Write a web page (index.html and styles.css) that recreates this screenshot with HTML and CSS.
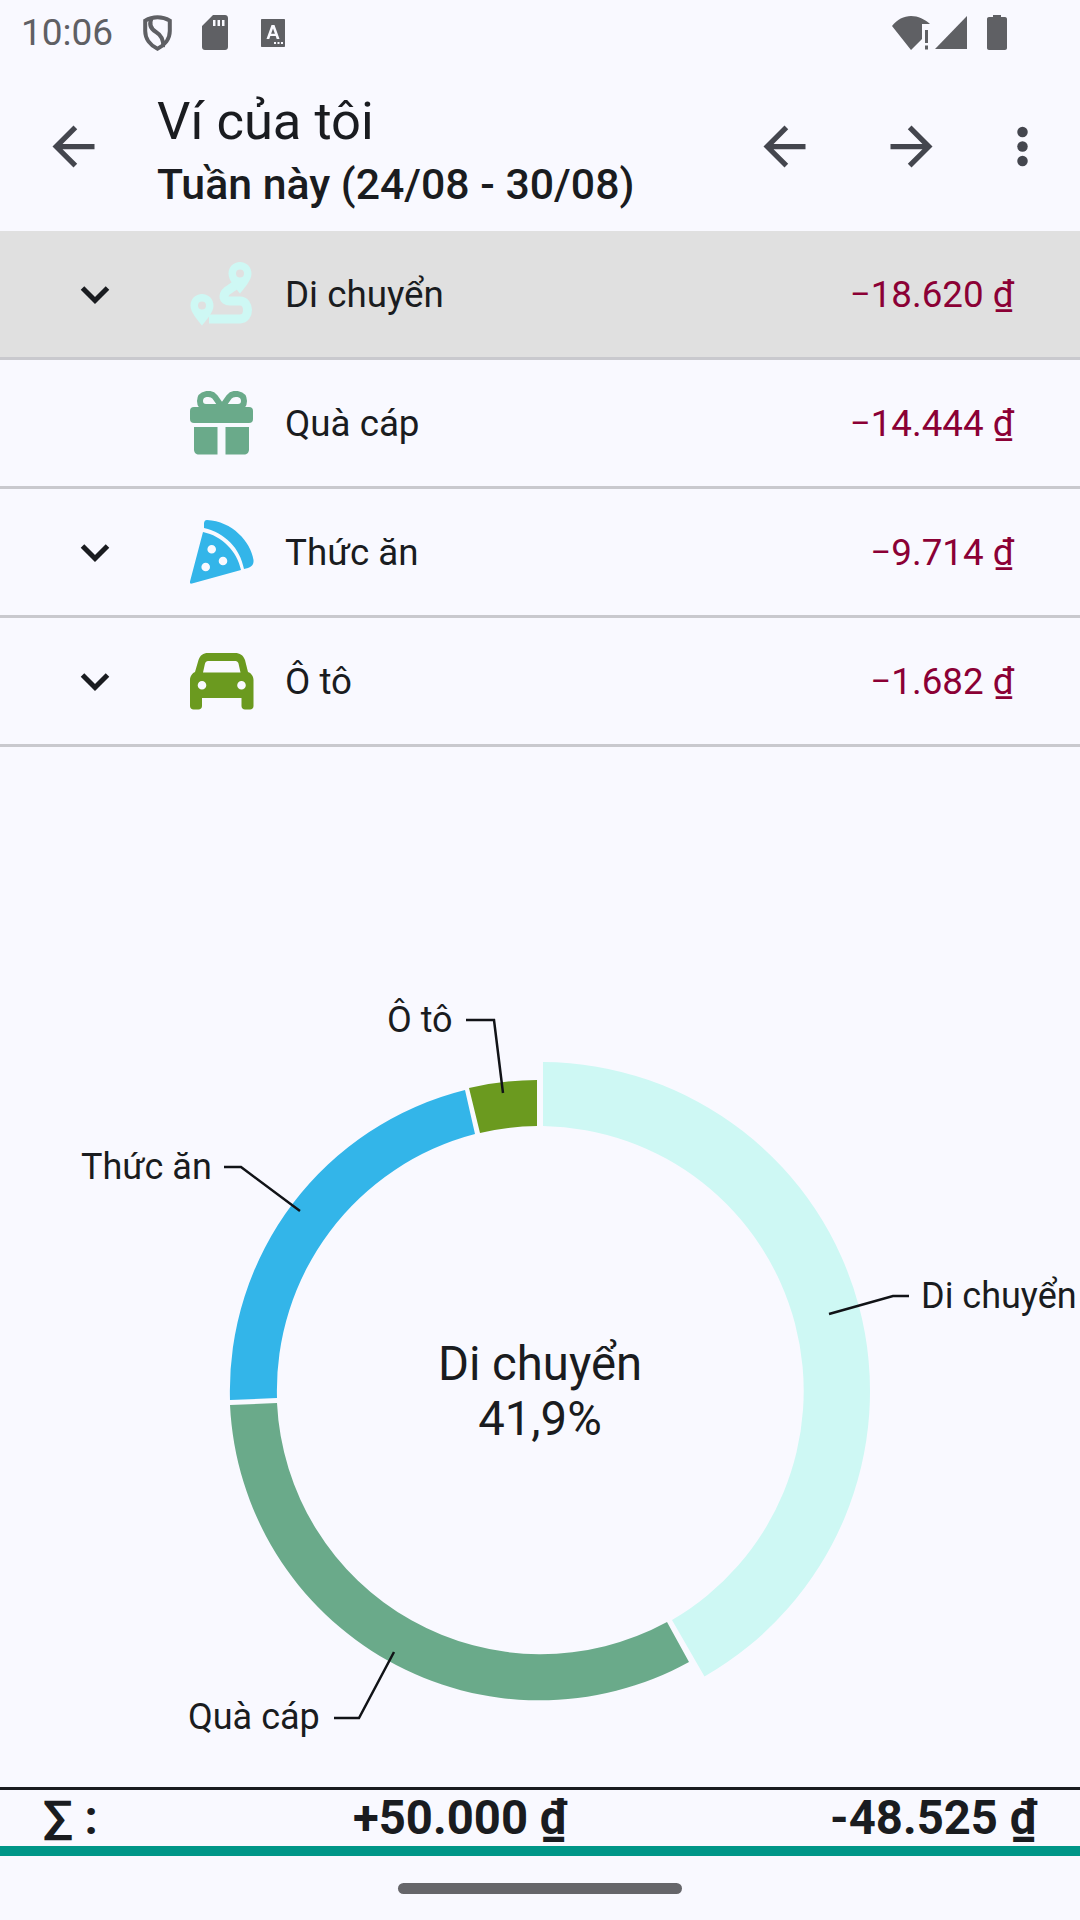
FILE: index.html
```html
<!DOCTYPE html>
<html lang="vi">
<head>
    <meta charset="UTF-8">
    <meta name="viewport" content="width=device-width, initial-scale=1.0">
    <title>Ví của tôi</title>
    <link rel="stylesheet" href="styles.css">
</head>
<body>
    <div class="app">
        <div class="status-bar">
            <div class="status-left">
                <span class="status-time">10:06</span>
                <svg class="icon-shield" viewBox="0 0 29 36"><path d="M14.500 2.200C19 2.200 23.500 3.600 26.800 5.600V16C26.800 24 21.500 30.500 14.500 33.700C7.500 30.500 2.200 24 2.200 16V5.600C5.500 3.600 10 2.200 14.500 2.200Z"/><path d="M8.500 3.500C5.500 10 8 14 13 17C18 20 21 24 20 32"/></svg>
                <svg class="icon-sd" viewBox="0 0 26 35"><path fill-rule="evenodd" d="M11 0H23C24.700 0 26 1.300 26 3V32C26 33.700 24.700 35 23 35H3C1.300 35 0 33.700 0 32V11ZM11 5V11H13.500V5ZM15.500 5V11H18V5ZM20 5V11H22.500V5Z"/></svg>
                <svg class="icon-keyboard" viewBox="0 0 24 28"><path fill-rule="evenodd" d="M1 0H23C23.600 0 24 .4 24 1V27C24 27.600 23.600 28 23 28H1C.4 28 0 27.600 0 27V1C0 .4 .4 0 1 0ZM10.500 6L5.500 20H8.300L9.300 17H14.700L15.700 20H18.500L13.500 6ZM12 9.500L13.900 14.700H10.100ZM13 23V25H15V23ZM16.500 23V25H18.500V23ZM20 23V25H22V23Z"/></svg>
            </div>
            <div class="status-right">
                <svg class="icon-wifi" viewBox="0 0 38 34"><path d="M0 10C5 3.500 12 0 19 0C26 0 33 3.500 38 8H30V23L19 34Z"/><path d="M33 14H36V27H33ZM33 29.500H36V33.500H33Z"/></svg>
                <svg class="icon-signal" viewBox="0 0 32 33"><path d="M32 0V33H0Z"/></svg>
                <svg class="icon-battery" viewBox="0 0 20 35"><path d="M6 0H14V2H18C19.100 2 20 2.900 20 4V33C20 34.100 19.100 35 18 35H2C.9 35 0 34.100 0 33V4C0 2.900 .9 2 2 2H6Z"/></svg>
            </div>
        </div>

        <div class="toolbar">
            <svg class="tool-icon" viewBox="0 0 24 24"><path d="M20 11H7.830l5.590-5.590L12 4l-8 8 8 8 1.410-1.410L7.830 13H20v-2z"/></svg>
            <div class="toolbar-title">
                <div class="title">Ví của tôi</div>
                <div class="subtitle">Tuần này (24/08 - 30/08)</div>
            </div>
            <svg class="tool-icon prev-icon" viewBox="0 0 24 24"><path d="M20 11H7.830l5.590-5.590L12 4l-8 8 8 8 1.410-1.410L7.830 13H20v-2z"/></svg>
            <svg class="tool-icon next-icon" viewBox="0 0 24 24"><path d="M12 4l-1.410 1.410L16.170 11H4v2h12.170l-5.580 5.590L12 20l8-8z"/></svg>
            <svg class="tool-icon more-icon" viewBox="0 0 24 24"><circle cx="12" cy="6.500" r="2"/><circle cx="12" cy="12" r="2"/><circle cx="12" cy="17.500" r="2"/></svg>
        </div>

        <div class="category-list">
            <div class="category-row selected">
                <svg class="chevron" viewBox="0 0 64 40"><path d="M19.500 14L32 26.500L44.500 14"/></svg>
                <svg class="category-icon" viewBox="0 0 64 64">
                    <path class="route-line" d="M47 22L40 27C32 31 32 39 40 39H50C60 39 60 57 50 57H19"/>
                    <path class="route-pin" fill-rule="evenodd" d="M12 32C18.400 32 23.500 37 23.500 43.500C23.500 50.500 16 58.500 12 63.500C8 58.500 .5 50.500 .5 43.500C.5 37 5.600 32 12 32ZM12 39.500A4 4 0 1 0 12 47.500A4 4 0 1 0 12 39.500Z"/>
                    <path class="route-pin" fill-rule="evenodd" d="M50 0C56.400 0 61.500 5 61.500 11.500C61.500 18.500 54 26.500 50 31.500C46 26.500 38.500 18.500 38.500 11.500C38.500 5 43.600 0 50 0ZM50 7.500A4 4 0 1 0 50 15.500A4 4 0 1 0 50 7.500Z"/>
                </svg>
                <span class="category-name">Di chuyển</span>
                <span class="category-amount">−18.620 ₫</span>
            </div>
            <div class="category-row">
                <span class="chevron"></span>
                <svg class="category-icon gift-icon" viewBox="0 0 64 64">
                    <path class="gift-bow" d="M32 16L25 6C21 1 10 2 10 10C10 14 12 16 16 16ZM32 16L39 6C43 1 54 2 54 10C54 14 52 16 48 16Z"/>
                    <rect x="0" y="16" width="63" height="16" rx="4"/>
                    <path d="M4 36H27.500V63.500H9C6 63.500 4 61.500 4 58.500ZM35.500 36H59V58.500C59 61.500 57 63.500 54 63.500H35.500Z"/>
                </svg>
                <span class="category-name">Quà cáp</span>
                <span class="category-amount">−14.444 ₫</span>
            </div>
            <div class="category-row">
                <svg class="chevron" viewBox="0 0 64 40"><path d="M19.500 14L32 26.500L44.500 14"/></svg>
                <svg class="category-icon pizza-icon" viewBox="0 0 64 64">
                    <path d="M17 0C42 1 61 22 63.500 40C64 45 61 47 58 48L54 49C50 28 35 13 14 8L14 3C14.500 1 15 0 17 0Z"/>
                    <path fill-rule="evenodd" d="M13 12C32 16 47 31 51 50L2 63.500C.5 64 -.5 63 0 61.500ZM21.700 25A4.300 4.300 0 1 0 21.700 33.600A4.300 4.300 0 1 0 21.700 25ZM33 36.700A4.300 4.300 0 1 0 33 45.300A4.300 4.300 0 1 0 33 36.700ZM15.700 42.700A4.300 4.300 0 1 0 15.700 51.300A4.300 4.300 0 1 0 15.700 42.700Z"/>
                </svg>
                <span class="category-name">Thức ăn</span>
                <span class="category-amount">−9.714 ₫</span>
            </div>
            <div class="category-row">
                <svg class="chevron" viewBox="0 0 64 40"><path d="M19.500 14L32 26.500L44.500 14"/></svg>
                <svg class="category-icon car-icon" viewBox="0 0 64 57">
                    <path fill-rule="evenodd" d="M18 0H45C50 0 53 2 55 7L58 19C61 20 63.500 23 63.500 27V53C63.500 55 62 56.500 60 56.500H55C53 56.500 51.500 55 51.500 53V45H12V53C12 55 10.500 56.500 8.500 56.500H3.500C1.500 56.500 0 55 0 53V27C0 23 2.500 20 5 19L8.500 7C10.500 2 13 0 18 0ZM18 8C16.500 8 15.500 9 15 10.500L13 19.500H50.500L48.500 10.500C48 9 47 8 45.500 8ZM12 28A4.300 4.300 0 1 0 12 36.600A4.300 4.300 0 1 0 12 28ZM51.500 28A4.300 4.300 0 1 0 51.500 36.600A4.300 4.300 0 1 0 51.500 28Z"/>
                </svg>
                <span class="category-name">Ô tô</span>
                <span class="category-amount">−1.682 ₫</span>
            </div>
        </div>

        <div class="chart-area">
            <svg class="donut" viewBox="0 746 1080 1041">
                <path class="slice-move" d="M543 1061A329 329 0 0 1 704.500 1675.500L672 1619A265 265 0 0 0 543 1125Z"/>
                <path class="slice-gift" d="M689 1661A310 310 0 0 1 230 1404L277 1402A264 264 0 0 0 667 1621Z"/>
                <path class="slice-food" d="M230 1399A310 310 0 0 1 465 1089L475 1133A265 265 0 0 0 277 1397Z"/>
                <path class="slice-car" d="M469 1087A311 311 0 0 1 537 1079V1125A265 265 0 0 0 480 1132Z"/>

                <polyline class="leader" points="829,1313 893,1295 909,1295"/>
                <polyline class="leader" points="394,1651 359,1717 334,1717"/>
                <polyline class="leader" points="300,1210 241,1166 224,1166"/>
                <polyline class="leader" points="503,1092 494,1019 466,1019"/>

                <text class="slice-label" x="921" y="1307">Di chuyển</text>
                <text class="slice-label" x="188" y="1728">Quà cáp</text>
                <text class="slice-label" x="81" y="1178">Thức ăn</text>
                <text class="slice-label" x="387" y="1031">Ô tô</text>

                <text class="center-label" x="540" y="1379">Di chuyển</text>
                <text class="center-label" x="540" y="1434">41,9%</text>
            </svg>
        </div>

        <div class="totals">
            <span class="total-sigma">∑ :</span>
            <span class="total-income">+50.000 ₫</span>
            <span class="total-expense">-48.525 ₫</span>
        </div>
        <div class="accent-bar"></div>
        <div class="nav-bar"><div class="nav-handle"></div></div>
    </div>
</body>
</html>
```

FILE: styles.css
```css
* {
    box-sizing: border-box;
}

body {
    margin: 0;
    background: #f9f9ff;
    color: #1a1c20;
    font-family: Roboto, "Noto Sans", sans-serif;
}

.app {
    width: 1080px;
    height: 1920px;
    display: flex;
    flex-direction: column;
    overflow: hidden;
}

/* status bar */
.status-bar {
    height: 62px;
    padding: 3px 73px 0 21px;
    display: flex;
    justify-content: space-between;
    align-items: center;
    fill: #5f6064;
    color: #5f6064;
}

.status-left,
.status-right {
    display: flex;
    align-items: center;
}

.status-left {
    gap: 30px;
}

.status-time {
    font-size: 37px;
    width: 92px;
}

.icon-shield {
    width: 29px;
    height: 36px;
    fill: none;
    stroke: #5f6064;
    stroke-width: 4;
}

.icon-sd {
    width: 26px;
    height: 35px;
}

.icon-keyboard {
    width: 24px;
    height: 28px;
    margin-left: 3px;
}

.icon-wifi {
    width: 38px;
    height: 34px;
}

.icon-signal {
    width: 32px;
    height: 33px;
    margin-left: 5px;
}

.icon-battery {
    width: 20px;
    height: 35px;
    margin-left: 20px;
}

/* toolbar */
.toolbar {
    height: 169px;
    padding: 0 26px 0 42px;
    display: flex;
    align-items: center;
}

.tool-icon {
    width: 63px;
    height: 63px;
    flex: none;
    fill: #44464e;
}

.toolbar-title {
    margin-left: 52px;
    padding-top: 8px;
    flex: 1;
}

.title {
    font-size: 52.500px;
    line-height: 66px;
}

.subtitle {
    font-size: 42.800px;
    line-height: 60px;
    font-weight: 500;
}

.next-icon {
    margin-left: 64px;
}

.more-icon {
    margin-left: 48px;
}

/* category rows */
.category-row {
    height: 129px;
    padding: 0 66px 0 63px;
    display: flex;
    align-items: center;
    border-bottom: 3px solid #c9c9ce;
}

.category-row.selected {
    background: #e0e0e0;
}

.chevron {
    width: 64px;
    height: 40px;
    flex: none;
    fill: none;
    stroke: #1a1c20;
    stroke-width: 5;
}

.category-icon {
    width: 64px;
    height: 64px;
    margin-left: 63px;
    flex: none;
}

.route-line {
    fill: none;
    stroke: #cef8f4;
    stroke-width: 9;
}

.route-pin {
    fill: #cef8f4;
}

.gift-icon {
    fill: #6aaa8a;
}

.gift-bow {
    fill: none;
    stroke: #6aaa8a;
    stroke-width: 6;
}

.pizza-icon {
    fill: #33b5e9;
}

.car-icon {
    height: 57px;
    fill: #6b9a1f;
}

.category-name {
    margin-left: 31px;
    flex: 1;
    font-size: 36.750px;
}

.category-amount {
    font-size: 36.750px;
    color: #8b0035;
}

/* donut chart */
.chart-area {
    flex: 1;
    min-height: 0;
}

.donut {
    display: block;
    width: 1080px;
    height: 1041px;
}

.slice-move {
    fill: #cef8f4;
}

.slice-gift {
    fill: #6aaa8a;
}

.slice-food {
    fill: #33b5e9;
}

.slice-car {
    fill: #6b9a1f;
}

.leader {
    fill: none;
    stroke: #111317;
    stroke-width: 2.500;
}

.slice-label {
    font-size: 36px;
    fill: #1a1c20;
}

.center-label {
    font-size: 47.250px;
    fill: #1a1c20;
    text-anchor: middle;
}

/* totals footer */
.totals {
    height: 59px;
    flex: none;
    padding: 2px 43px 0;
    display: grid;
    grid-template-columns: 310px 1fr auto;
    align-items: center;
    border-top: 3px solid #1a1c20;
    font-size: 47.250px;
    font-weight: 700;
    line-height: 1;
    white-space: nowrap;
}

.accent-bar {
    height: 10px;
    flex: none;
    background: #009688;
}

.nav-bar {
    height: 64px;
    flex: none;
    display: flex;
    justify-content: center;
    align-items: center;
}

.nav-handle {
    width: 284px;
    height: 11px;
    border-radius: 6px;
    background: #66666a;
}
```
